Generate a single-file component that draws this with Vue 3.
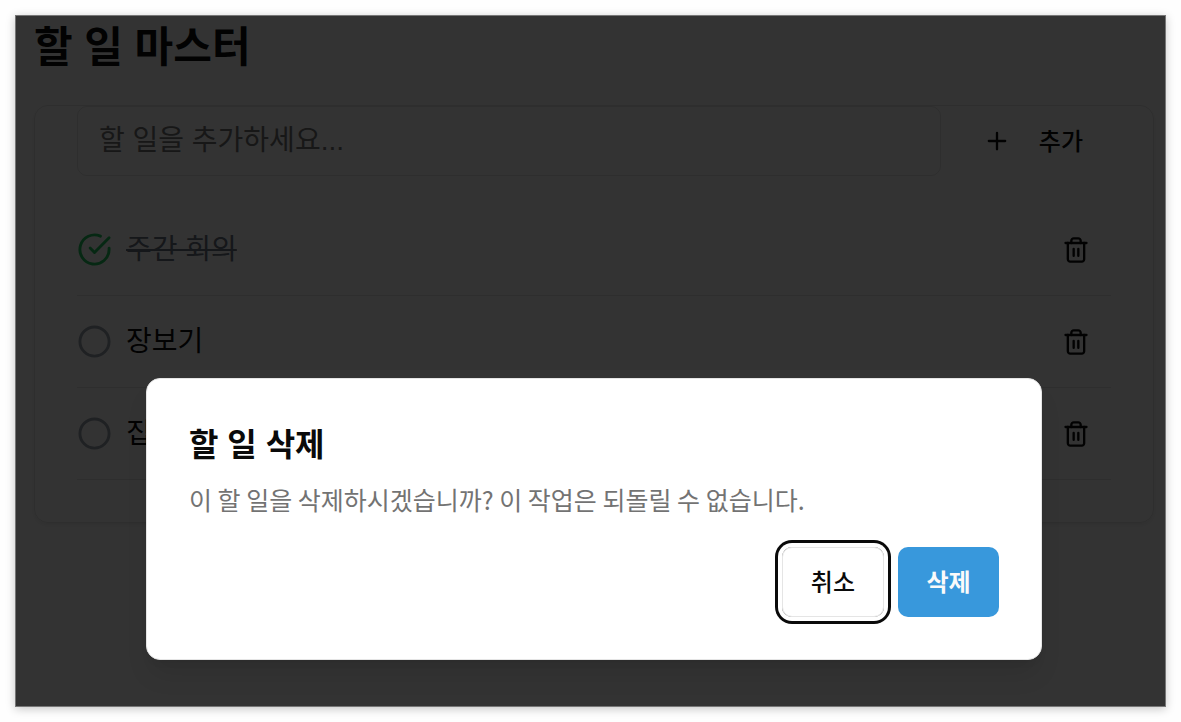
<script setup>
import { ref } from 'vue'

const draft = ref('')
const todos = ref([
  { id: 1, text: '주간 회의', done: true },
  { id: 2, text: '장보기', done: false },
  { id: 3, text: '집', done: false },
])
</script>

<template>
  <div class="page">
    <div class="frame">
      <main class="main">
        <h1 class="title">할 일 마스터</h1>
        <section class="card">
          <form class="add" @submit.prevent>
            <input v-model="draft" class="field" type="text" placeholder="할 일을 추가하세요..." aria-label="할 일" />
            <button class="btn add-btn" type="submit">
              <svg class="icon" viewBox="0 0 24 24" aria-hidden="true"><path d="M5 12h14M12 5v14" /></svg>
              추가
            </button>
          </form>
          <ul class="list">
            <li v-for="todo in todos" :key="todo.id" class="row">
              <button class="toggle" :class="{ done: todo.done }" type="button" :aria-pressed="todo.done">
                <svg v-if="todo.done" class="mark" viewBox="0 0 24 24" aria-hidden="true">
                  <path d="M22 11.08V12a10 10 0 1 1-5.93-9.14" />
                  <path d="m9 11 3 3L22 4" />
                </svg>
                <svg v-else class="mark" viewBox="0 0 24 24" aria-hidden="true"><circle cx="12" cy="12" r="10" /></svg>
                <span class="label">{{ todo.text }}</span>
              </button>
              <button class="remove" type="button" :aria-label="todo.text + ' 삭제'">
                <svg class="icon" viewBox="0 0 24 24" aria-hidden="true">
                  <path d="M3 6h18" />
                  <path d="M19 6v14c0 1-1 2-2 2H7c-1 0-2-1-2-2V6" />
                  <path d="M8 6V4c0-1 1-2 2-2h4c1 0 2 1 2 2v2" />
                  <path d="M10 11v6M14 11v6" />
                </svg>
              </button>
            </li>
          </ul>
        </section>
      </main>

      <div class="overlay">
        <div class="dialog" role="alertdialog" aria-modal="true" aria-labelledby="dlg-title" aria-describedby="dlg-text">
          <h2 id="dlg-title" class="dialog-title">할 일 삭제</h2>
          <p id="dlg-text" class="dialog-text">이 할 일을 삭제하시겠습니까? 이 작업은 되돌릴 수 없습니다.</p>
          <div class="actions">
            <button class="btn cancel" type="button">취소</button>
            <button class="btn confirm" type="button">삭제</button>
          </div>
        </div>
      </div>
    </div>
  </div>
</template>

<style>
body {
  background: #fefefe;
}
</style>

<style scoped>
* {
  box-sizing: border-box;
  margin: 0;
}
.page {
  display: flex;
  min-height: 100vh;
  padding: 15px;
  color: #0a0a0a;
  font-family: "Liberation Sans", "Noto Sans CJK KR", sans-serif;
}
button,
input {
  border: 0;
  background: none;
  color: inherit;
  font: inherit;
}
.frame {
  position: relative;
  flex: 1;
  min-width: 0;
  border: 1px solid #777;
  background: #fff;
  box-shadow: 0 2px 9px rgba(0, 0, 0, 0.22);
}
.main {
  padding: 0 11px 0 18px;
}
.title {
  margin-bottom: 26px;
  font-size: 42px;
  font-weight: 700;
  line-height: 63px;
}
.card {
  padding: 0 42px 42px;
  border: 1px solid #e5e5e5;
  border-radius: 14px;
  box-shadow: 0 2px 4px rgba(0, 0, 0, 0.08);
}
.add {
  display: flex;
  gap: 14px;
  margin-bottom: 28px;
}
.field {
  flex: 1;
  min-width: 0;
  height: 70px;
  padding: 0 21px;
  border: 1px solid #e5e5e5;
  border-radius: 10px;
  font-size: 28px;
}
.field::placeholder {
  color: #737373;
  opacity: 1;
}
.btn {
  display: flex;
  align-items: center;
  justify-content: center;
  min-width: 101px;
  height: 70px;
  padding: 0 28px;
  border-radius: 10px;
  font-size: 24px;
  font-weight: 500;
  line-height: 35px;
}
.add-btn {
  gap: 28px;
}
.icon,
.mark {
  display: block;
  flex: none;
  width: 28px;
  height: 28px;
  fill: none;
  stroke: currentColor;
  stroke-width: 2;
  stroke-linecap: round;
  stroke-linejoin: round;
}
.mark {
  width: 35px;
  height: 35px;
  margin-bottom: 2px;
  color: #9ca3af;
}
.list {
  padding: 0;
  list-style: none;
}
.row {
  display: flex;
  align-items: center;
  justify-content: space-between;
  padding: 11px 0 10px;
  border-bottom: 1px solid #e5e5e5;
}
.toggle {
  display: flex;
  align-items: center;
  gap: 14px;
  padding: 0;
}
.label {
  font-size: 28px;
  line-height: 42px;
}
.done .mark {
  color: #22c55e;
}
.done .label {
  color: #6b7280;
  text-decoration: line-through;
}
.remove {
  display: grid;
  place-items: center;
  width: 70px;
  height: 70px;
  padding: 0;
}
.overlay {
  position: absolute;
  inset: 0;
  display: flex;
  align-items: flex-end;
  justify-content: center;
  padding: 0 0 46px 7px;
  background: rgba(0, 0, 0, 0.8);
}
.dialog {
  width: 100%;
  max-width: 896px;
  padding: 42px;
  border: 1px solid #e5e5e5;
  border-radius: 14px;
  background: #fff;
  box-shadow: 0 18px 26px -5px rgba(0, 0, 0, 0.1), 0 7px 10px -7px rgba(0, 0, 0, 0.1);
}
.dialog-title {
  margin-bottom: 14px;
  font-size: 32px;
  font-weight: 700;
  line-height: 49px;
}
.dialog-text {
  margin-bottom: 32px;
  color: #737373;
  font-family: "Noto Sans CJK KR", sans-serif;
  font-size: 25px;
  line-height: 31px;
}
.actions {
  display: flex;
  justify-content: flex-end;
  gap: 14px;
}
.cancel {
  border: 1px solid #e5e5e5;
  box-shadow: 0 0 0 4px #fff, 0 0 0 7px #0a0a0a;
}
.confirm {
  background: #3898dc;
  color: #fafafa;
  font-weight: 700;
}
</style>
